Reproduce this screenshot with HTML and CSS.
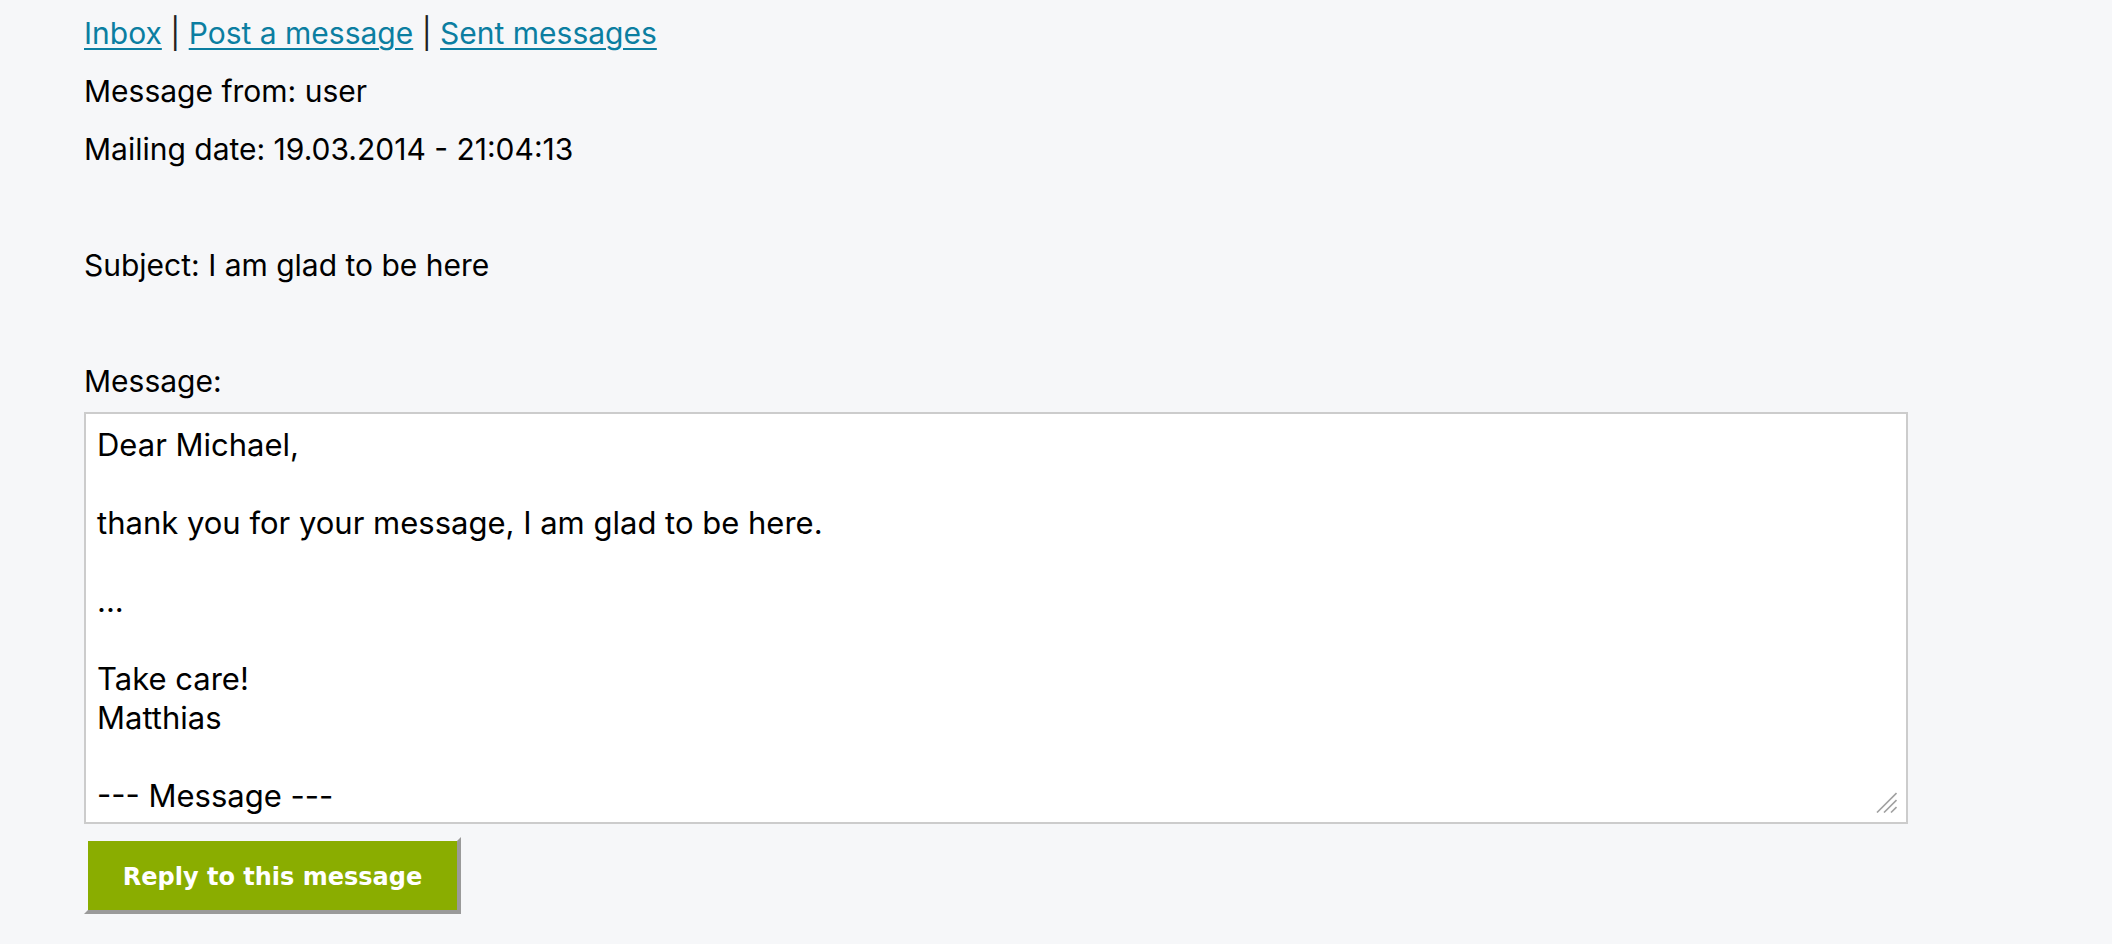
FILE: index.html
```html
<!DOCTYPE html>
<html lang="en">
<head>
<meta charset="utf-8">
<title>Message</title>
<link rel="stylesheet" href="styles.css">
</head>
<body>
<div class="page">
  <nav class="nav"><a href="#">Inbox</a> | <a href="#">Post a message</a> | <a href="#">Sent messages</a></nav>
  <div class="line">Message from: user</div>
  <div class="line">Mailing date: 19.03.2014 - 21:04:13</div>
  <div class="line gap">Subject: I am glad to be here</div>
  <div class="line gap">Message:</div>
  <div class="textwrap">
    <textarea class="msg" readonly>Dear Michael,

thank you for your message, I am glad to be here.

...

Take care!
Matthias

--- Message ---</textarea>
    <svg class="grip" width="21" height="21" viewBox="0 0 21 21" aria-hidden="true">
      <line x1="1" y1="20.5" x2="20.5" y2="1" stroke="#a0a0a0" stroke-width="1.6"/>
      <line x1="8" y1="20.5" x2="20.5" y2="8" stroke="#a0a0a0" stroke-width="1.6"/>
      <line x1="15" y1="20.5" x2="20.5" y2="15" stroke="#a0a0a0" stroke-width="1.6"/>
    </svg>
  </div>
  <button class="reply" type="button">Reply to this message</button>
</div>
</body>
</html>
```
FILE: styles.css
```css
html, body {
  margin: 0;
  padding: 0;
  background: #f6f7f9;
}

body {
  font-family: Inter, "Open Sans", "Noto Sans", sans-serif;
  font-size: 30px;
  color: #000;
}

.page {
  padding: 4px 0 40px 84px;
}

.nav {
  line-height: 58px;
  height: 58px;
  color: #222;
}

.nav a {
  color: #0b7ea1;
  text-decoration: underline;
  text-decoration-thickness: 2px;
  text-underline-offset: 4px;
}

.line {
  line-height: 58px;
  height: 58px;
}

.gap {
  margin-top: 58px;
}

.textwrap {
  position: relative;
  width: 1824px;
  height: 412px;
  margin-top: 2px;
}

.msg {
  display: block;
  box-sizing: border-box;
  width: 1824px;
  height: 412px;
  margin: 0;
  padding: 11px 10px 0 11px;
  border: 2px solid #cccccc;
  border-radius: 0;
  background: #ffffff;
  font-family: Inter, "Open Sans", "Noto Sans", sans-serif;
  font-size: 31px;
  line-height: 39px;
  color: #000;
  resize: none;
  overflow: hidden;
  outline: none;
}

.grip {
  position: absolute;
  right: 11px;
  bottom: 11px;
}

.reply {
  display: block;
  box-sizing: border-box;
  width: 377px;
  height: 77px;
  margin: 13px 0 0 0;
  padding: 2px 0 0 0;
  border-style: solid;
  border-width: 4px 4px 4px 4px;
  border-color: transparent #9a9a9a #9a9a9a transparent;
  background: #8aad00;
  background-clip: padding-box;
  color: #ffffff;
  font-family: "DejaVu Sans", sans-serif;
  font-weight: bold;
  font-size: 24px;
  cursor: pointer;
}
```
